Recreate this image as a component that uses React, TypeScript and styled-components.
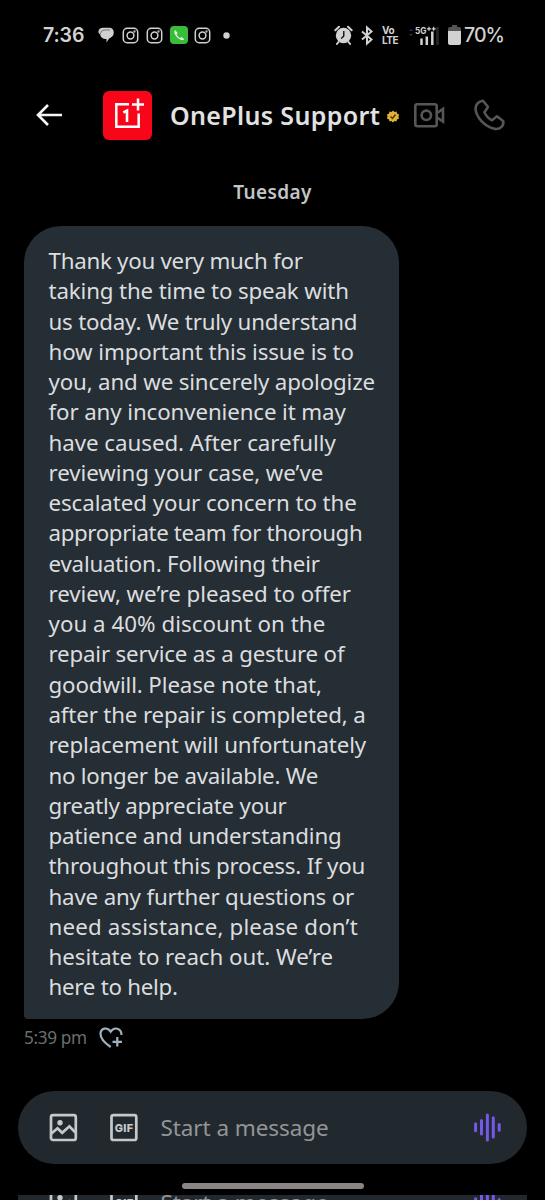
import React from "react";
import styled, { createGlobalStyle } from "styled-components";

const Global = createGlobalStyle`
  * { box-sizing: border-box; }
  html, body { margin: 0; background: #000; }
  body { font-family: "Noto Sans", "Open Sans", sans-serif; }
  svg { display: block; flex: none; overflow: visible; }
`;

const Screen = styled.main`
  width: 545px;
  height: 1200px;
  background: #000;
  overflow: hidden;
  display: flex;
  flex-direction: column;
`;

const StatusBar = styled.header`
  height: 70px;
  flex: none;
  padding: 0 41px 0 43px;
  display: flex;
  align-items: center;
  justify-content: space-between;
  color: #d2d2d2;
`;

const StatusGroup = styled.div`
  display: flex;
  align-items: center;
`;

const Clock = styled.span`
  width: 55px;
  font: 600 19.5px/24px Inter, sans-serif;
  letter-spacing: -0.1px;
  white-space: nowrap;
`;

const Battery = styled.span`
  font: 500 19.5px/24px Inter, sans-serif;
  letter-spacing: -0.9px;
  width: 40px;
  white-space: nowrap;
`;

const Carrier = styled.span`
  font: 700 10px/10px Inter, sans-serif;
  letter-spacing: -0.4px;
  width: 33px;
`;

const TopBar = styled.nav`
  height: 90px;
  flex: none;
  padding: 0 40px 0 36px;
  display: flex;
  align-items: center;
`;

const Avatar = styled.div`
  width: 49px;
  height: 49px;
  margin-left: 40px;
  border-radius: 6px;
  background: #f9051a;
`;

const Name = styled.h1`
  margin: 0 5px 0 18px;
  width: 214px;
  font-size: 25px;
  line-height: 34px;
  font-weight: 600;
  letter-spacing: 0.35px;
  color: #e2e2e2;
  white-space: nowrap;
`;

const DayLabel = styled.div`
  height: 66px;
  flex: none;
  padding-top: 18px;
  text-align: center;
  font-size: 19px;
  line-height: 28px;
  font-weight: 600;
  letter-spacing: 0.4px;
  color: #c4c5c6;
`;

const Bubble = styled.article`
  width: 375px;
  height: 793px;
  flex: none;
  margin-left: 24px;
  padding: 20px 0 0 24.5px;
  background: #252e35;
  border-radius: 37px 37px 37px 4px;
  color: #dcdddf;
  font-size: 22.3px;
  line-height: 30.27px;
`;

const Line = styled.div<{ $spacing: number }>`
  white-space: nowrap;
  letter-spacing: ${(p) => p.$spacing}px;
`;

const Meta = styled.div`
  height: 72px;
  flex: none;
  padding: 6px 0 0 24px;
  display: flex;
  align-items: flex-start;
  color: #6b6e71;
  font-size: 17.2px;
  line-height: 26px;
  & > svg {
    margin-top: 2px;
  }
`;

const Time = styled.time`
  width: 75px;
  letter-spacing: -0.35px;
  white-space: nowrap;
`;

const Composer = styled.div`
  width: 509px;
  height: 73px;
  flex: none;
  margin-left: 18px;
  padding: 0 25px 0 31px;
  border-radius: 37px;
  background: #22292e;
  display: flex;
  align-items: center;
`;

const Placeholder = styled.span`
  flex: 1;
  margin-left: 22.5px;
  font-size: 22.5px;
  line-height: 30px;
  letter-spacing: -0.08px;
  color: #929598;
`;

const Gap = styled.div<{ $w: number }>`
  width: ${(p) => p.$w}px;
  flex: none;
`;

const HomeArea = styled.div`
  height: 31px;
  flex: none;
  padding-top: 19px;
`;

const HomeBar = styled.div`
  width: 182px;
  height: 6px;
  margin-left: 181.5px;
  border-radius: 3px;
  background: #888584;
`;

const EdgeStrip = styled.div`
  height: 5px;
  flex: none;
  overflow: hidden;
`;

const StripInner = styled.div`
  height: 5px;
  display: flex;
  align-items: flex-start;
  & > div {
    margin-top: -29px;
    border-radius: 0;
  }
`;

const lines: [string, number][] = [
  ["Thank you very much for", -0.26],
  ["taking the time to speak with", -0.14],
  ["us today. We truly understand", -0.2],
  ["how important this issue is to", -0.1],
  ["you, and we sincerely apologize", -0.16],
  ["for any inconvenience it may", -0.11],
  ["have caused. After carefully", -0.03],
  ["reviewing your case, we’ve", -0.06],
  ["escalated your concern to the", -0.07],
  ["appropriate team for thorough", -0.37],
  ["evaluation. Following their", -0.19],
  ["review, we’re pleased to offer", -0.05],
  ["you a 40% discount on the", 0.04],
  ["repair service as a gesture of", -0.18],
  ["goodwill. Please note that,", -0.11],
  ["after the repair is completed, a", -0.16],
  ["replacement will unfortunately", -0.15],
  ["no longer be available. We", -0.27],
  ["greatly appreciate your", -0.22],
  ["patience and understanding", -0.12],
  ["throughout this process. If you", -0.19],
  ["have any further questions or", -0.17],
  ["need assistance, please don’t", 0.17],
  ["hesitate to reach out. We’re", -0.04],
  ["here to help.", -0.27],
];

const Camera = () => (
  <svg width="15" height="15" viewBox="0 0 15 15" fill="none" stroke="#d0d0d0" strokeWidth="1.5">
    <rect x=".3" y=".3" width="14.4" height="14.4" rx="3.8" />
    <circle cx="7.5" cy="7.5" r="3.4" />
    <circle cx="11.5" cy="3.5" r=".4" />
  </svg>
);

const ComposerRow = () => (
  <Composer>
    <svg width="28" height="28" viewBox="0 0 28 28" fill="none" stroke="#c6c8ca" strokeWidth="2.7">
      <rect x="2" y="1.2" width="24.8" height="24.8" rx="2" />
      <path d="M2.500 19.500 8.500 14.300 13.200 18.800 20.400 12.300 26.400 18.500" />
      <circle cx="11" cy="8.800" r="2.700" fill="#c6c8ca" stroke="none" />
    </svg>
    <Gap $w={33} />
    <svg width="28" height="28" viewBox="0 0 28 28">
      <rect x="1.500" y="1.200" width="24.800" height="24.800" rx="2" fill="none" stroke="#c6c8ca" strokeWidth="2.700" />
      <text x="13.900" y="17.700" textAnchor="middle" fill="#c6c8ca" fontFamily="Inter, sans-serif" fontWeight="800" fontSize="11" textLength="18.500">GIF</text>
    </svg>
    <Placeholder>Start a message</Placeholder>
    <svg width="28" height="28" viewBox="0 0 28 28" stroke="#7458e8" strokeWidth="3" strokeLinecap="round">
      <path d="M1.600 9.700v7M7.500 6.500v13.600M13.400 1v25M19.300 3.800v19.200M25.200 10.500v5.800" />
    </svg>
  </Composer>
);

export default function App() {
  return (
    <Screen>
      <Global />
      <StatusBar>
        <StatusGroup>
          <Clock>7:36</Clock>
          <svg width="16" height="16" viewBox="0 0 16 16" fill="#d0d0d0">
            <path d="M5 .8h6c3 0 4.800 2 4.800 4.700 0 3.200-2 5-4.700 6L8.500 15.500v-3.500C4.500 12 2.500 10 2.300 7.500 1 7 .4 6 .4 4.800.6 2.300 2.500.8 5 .8Z" />
            <path d="M2.300 7Q2.600 3.300 6 3h6" fill="none" stroke="#333" strokeWidth=".6" />
          </svg>
          <Gap $w={9} /><Camera /><Gap $w={9} /><Camera /><Gap $w={8} />
          <svg width="18" height="18" viewBox="0 0 18 18">
            <rect width="18" height="18" rx="4" fill="#38bd3b" />
            <path d="M5.200 4.100c-2 1.500-.4 4.700 2 7.100 2.400 2.400 5.500 4 7 2l-2.500-2.300-1.500 1.200C8.700 11.400 7.400 10 6.600 8.500l1-1.400L5.200 4.100Z" fill="#e5f5e5" />
          </svg>
          <Gap $w={7} /><Camera /><Gap $w={13} />
          <svg width="7" height="7"><circle cx="3.500" cy="3.500" r="3.200" fill="#d0d0d0" /></svg>
        </StatusGroup>
        <StatusGroup>
          <svg width="19" height="20" viewBox="0 0 19 20">
            <circle cx="9.500" cy="10.500" r="7.700" fill="#d2d2d2" />
            <path d="M1.300 5.200 5 1.700M17.700 5.200 14 1.700M4.500 17l-1.600 2M14.500 17l1.600 2" stroke="#d2d2d2" strokeWidth="2" strokeLinecap="round" />
            <path d="M9.800 6v5l-2.600 2.600" fill="none" stroke="#000" strokeWidth="1.300" />
          </svg>
          <Gap $w={8} />
          <svg width="12" height="19" viewBox="0 0 12 19" fill="none" stroke="#d2d2d2" strokeWidth="2">
            <path d="M1 5.500 10.500 13.500 6 17.500v-16L10.500 5.500 1 13.500" />
          </svg>
          <Gap $w={9} />
          <Carrier>Vo<br />LTE</Carrier>
          <svg width="25" height="21" viewBox="0 0 25 21">
            <text x="0" y="8.500" fill="#d2d2d2" fontFamily="Inter, sans-serif" fontWeight="700" fontSize="9" textLength="11.500" lengthAdjust="spacingAndGlyphs">5G</text>
            <path d="M12 3.800h4M14 1.800v4M16.700 3.800h4M18.700 1.800v4" stroke="#d2d2d2" strokeWidth="1.200" />
            <path d="M6.500 13.500v6.500M11.800 11.500v8.500M17.300 6.500v13.500" stroke="#d2d2d2" strokeWidth="2.500" />
            <path d="M22.500 2v18" stroke="#282828" strokeWidth="2.500" />
            <path d="M-6 6 -4 4 -2 6M-6 9 -4 11 -2 9" fill="#333" />
          </svg>
          <Gap $w={8} />
          <svg width="13" height="20" viewBox="0 0 13 20">
            <path d="M4 0h5v2h2q2 0 2 2v3H0V4q0-2 2-2h2Z" fill="#555" />
            <path d="M0 6h13v12q0 2-2 2H2q-2 0-2-2Z" fill="#d2d2d2" />
          </svg>
          <Gap $w={3} />
          <Battery>70%</Battery>
        </StatusGroup>
      </StatusBar>
      <TopBar>
        <svg width="27" height="24" viewBox="0 0 27 24" fill="none" stroke="#f5f5f5" strokeWidth="2.600">
          <path d="M26 12H2M12 2 2 12l10 10" />
        </svg>
        <Avatar>
          <svg width="49" height="49" viewBox="0 0 49 49" fill="none" stroke="#fff" strokeWidth="2.500">
            <path d="M26 13.300H13.300v22.400H35.700V22.500M35 7.500v12M29 13.500h12" />
            <path d="M20.300 21.500 24 19.600v11.500" strokeWidth="2.600" />
          </svg>
        </Avatar>
        <Name>OnePlus Support</Name>
        <svg width="12" height="12" viewBox="0 0 24 24">
          <path d="m12 0 3 3 4-1 1 4 4 2-1 4 1 4-4 2-1 4-4-1-3 3-3-3-4 1-1-4-4-2 1-4-1-4 4-2 1-4 4 1Z" fill="#e2b034" transform="translate(0 3)" />
          <path d="m7 15 4 4 6-8" fill="none" stroke="#40300a" strokeWidth="2.600" />
        </svg>
        <Gap $w={15} />
        <svg width="31" height="25" viewBox="0 0 31 25" fill="none" stroke="#555658" strokeWidth="2.600">
          <rect x="1.300" y="1.300" width="21.400" height="22" rx="2" />
          <circle cx="12.300" cy="12.300" r="4.700" />
          <path d="M23 10 29 6v12.500l-6-4" />
        </svg>
        <Gap $w={29} />
        <svg width="31" height="32" viewBox="0 0 31 32" fill="none" stroke="#555658" strokeWidth="2.600" strokeLinejoin="round">
          <path d="M9 1.700 14 8l-3.600 5.300c1.600 3.700 4.100 6.100 7.600 8l5-4 6.300 5c.6 4.800-3.300 8.300-8.300 7.600C10.500 28 2 18 1.500 9.500 1.400 6 4.600 2.100 9 1.700Z" />
        </svg>
      </TopBar>
      <DayLabel>Tuesday</DayLabel>
      <Bubble>
        {lines.map(([t, s]) => <Line key={t} $spacing={s}>{t}</Line>)}
      </Bubble>
      <Meta>
        <Time>5:39 pm</Time>
        <svg width="25" height="22" viewBox="0 0 25 22" fill="none" stroke="#9eb2c0" strokeWidth="2.200">
          <path d="M11.700 20C5 15.500 1.500 11.500 1.500 7c0-6 7-7.500 10.200-2.300C15-.5 22.500.8 22.500 8M18.300 10v9.500M13.500 14.800h9.500" />
        </svg>
      </Meta>
      <ComposerRow />
      <HomeArea><HomeBar /></HomeArea>
      <EdgeStrip><StripInner><ComposerRow /></StripInner></EdgeStrip>
    </Screen>
  );
}
